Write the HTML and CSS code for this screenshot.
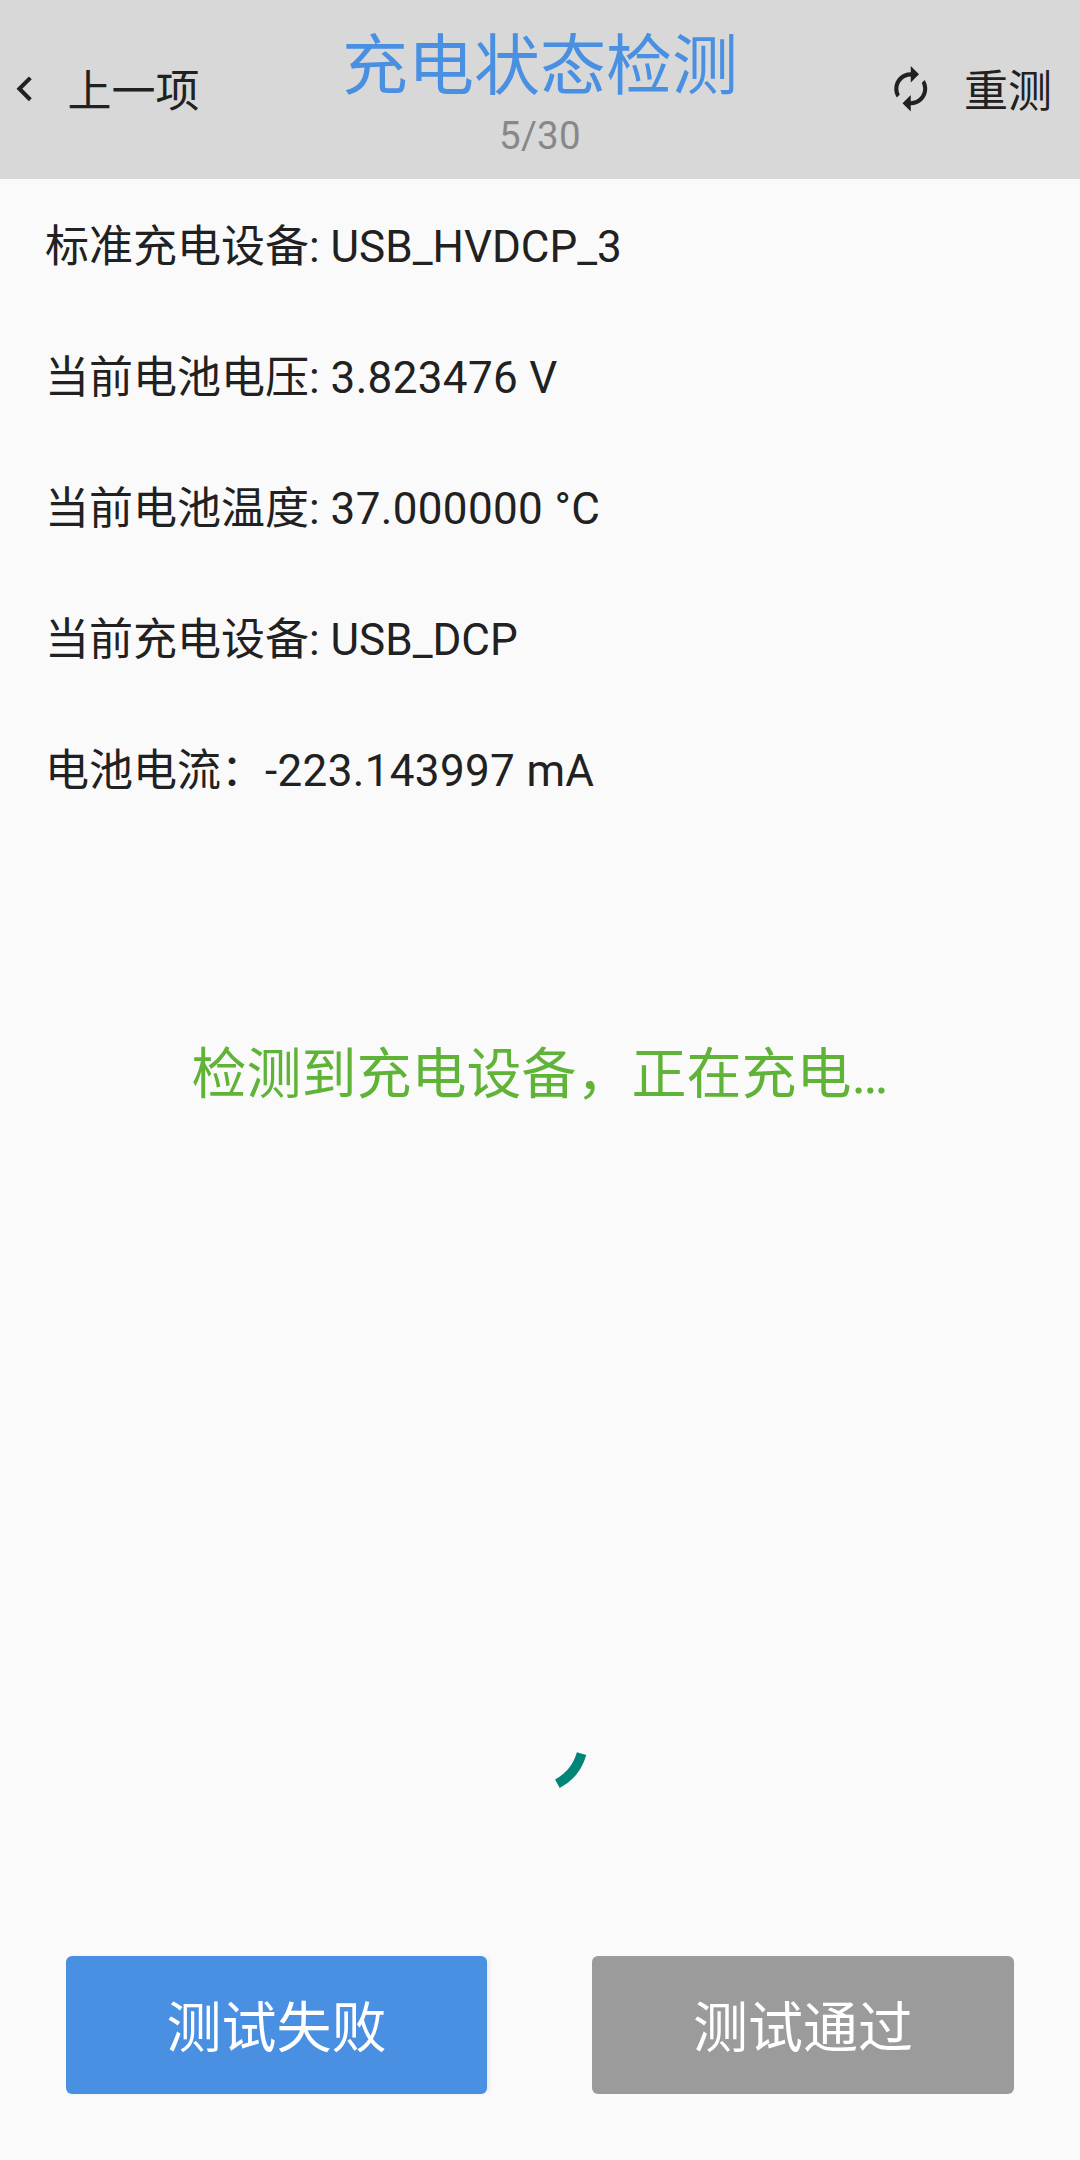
FILE: index.html
```
<!DOCTYPE html>
<html lang="zh-CN">

<head>
    <meta charset="UTF-8">
    <meta name="viewport" content="width=device-width, initial-scale=1.0">
    <title>充电状态检测</title>
    <link rel="stylesheet" href="styles.css">
</head>

<body>
    <header class="header">
        <div class="nav prev">
            <svg class="icon" viewBox="0 0 24 24">
                <path d="M15.41 7.41L14 6l-6 6 6 6 1.41-1.41L10.83 12z" />
            </svg>
            <span class="label">上一项</span>
        </div>
        <div class="heading">
            <h1>充电状态检测</h1>
            <p class="step">5/30</p>
        </div>
        <div class="nav retest">
            <svg class="icon" viewBox="0 0 24 24">
                <path d="M12 6v3l4-4-4-4v3c-4.42 0-8 3.58-8 8 0 1.57.46 3.03 1.24 4.26L6.7 14.8c-.45-.83-.7-1.79-.7-2.8 0-3.31 2.69-6 6-6zm6.76 1.74L17.3 9.2c.44.84.7 1.79.7 2.8 0 3.31-2.69 6-6 6v-3l-4 4 4 4v-3c4.42 0 8-3.58 8-8 0-1.57-.46-3.03-1.24-4.26z" />
            </svg>
            <span class="label">重测</span>
        </div>
    </header>

    <main class="content">
        <ul class="info">
            <li>标准充电设备: USB_HVDCP_3</li>
            <li>当前电池电压: <span class="value">3.823476 V</span></li>
            <li>当前电池温度: <span class="value">37.000000 °C</span></li>
            <li>当前充电设备: USB_DCP</li>
            <li>电池电流：<span class="value">-223.143997 mA</span></li>
        </ul>
        <p class="status">检测到充电设备，正在充电…</p>
        <!-- Loading spinner -->
        <svg class="spinner" viewBox="0 0 132 132">
            <path d="M107.6 74.6A50 50 0 0 1 83.4 104.8" />
        </svg>
    </main>

    <footer class="actions">
        <button class="btn fail">测试失败</button>
        <button class="btn pass">测试通过</button>
    </footer>
</body>

</html>
```
FILE: styles.css
```
* {
    box-sizing: border-box;
}

body {
    display: flex;
    flex-direction: column;
    height: 100vh;
    margin: 0;
    background-color: #fafafa;
    color: #212121;
    font-family: Roboto, "Noto Sans CJK SC", sans-serif;
    font-size: 44px;
}

.header {
    display: grid;
    grid-template-columns: 1fr auto 1fr;
    height: 179px;
    background-color: #d8d8d8;
}

.nav {
    display: flex;
    align-items: center;
    height: 178px;
    line-height: 52px;
}

.label {
    padding-top: 5px;
}

.prev {
    gap: 18px;
}

.retest {
    justify-content: flex-end;
    gap: 29px;
    padding-right: 28px;
}

.icon {
    width: 49.5px;
    height: 49.5px;
    fill: #212121;
}

.heading {
    padding-top: 28px;
    text-align: center;
}

h1 {
    margin: 0;
    color: #4a90e2;
    font-size: 66px;
    font-weight: 400;
    line-height: 77px;
}

.step {
    margin: 8px 0 0;
    color: #888;
    font-size: 38.5px;
    letter-spacing: 0.3px;
    line-height: 45px;
}

.content {
    display: flex;
    flex-direction: column;
    flex: 1;
}

.info {
    margin: 0;
    padding: 3px 45px 0;
    list-style: none;
    line-height: 131px;
}

.value {
    letter-spacing: 0.35px;
}

.status {
    margin: 204px 0 0;
    color: #5fb336;
    font-size: 55px;
    line-height: 66px;
    text-align: center;
}

.spinner {
    width: 132px;
    height: 132px;
    margin: 572px auto 0;
    fill: none;
    stroke: #008577;
    stroke-width: 9.8;
}

.actions {
    display: flex;
    justify-content: space-between;
    padding: 0 66px 66px;
}

.btn {
    width: 421px;
    height: 138px;
    padding: 0 0 5px;
    border: none;
    border-radius: 6px;
    color: #fff;
    font-family: inherit;
    font-size: 55px;
}

.fail {
    background-color: #4a90e2;
    box-shadow: 3px 0 4px -1px rgba(0, 0, 0, 0.08);
}

.pass {
    width: 422px;
    background-color: #9b9b9b;
}
```
